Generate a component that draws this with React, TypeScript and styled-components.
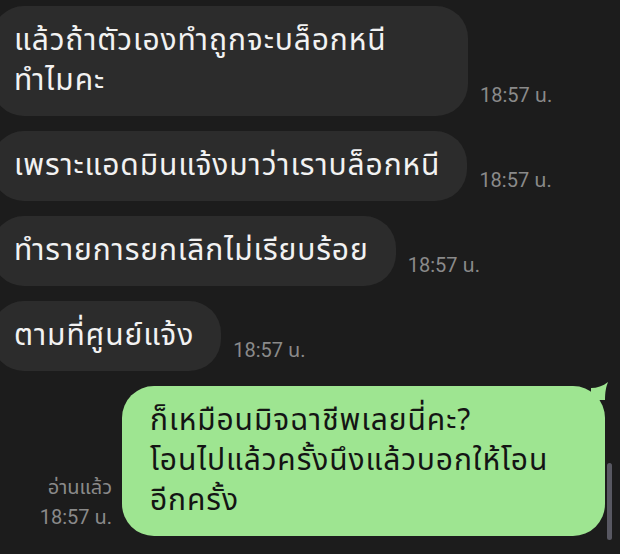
import React from 'react'
import styled, { createGlobalStyle } from 'styled-components'

const GlobalStyle = createGlobalStyle`
  html, body {
    margin: 0;
    padding: 0;
    background: #1c1c1c;
  }
  body {
    font-family: "Noto Sans Thai", "Noto Sans", "DejaVu Sans", sans-serif;
  }
`

const Screen = styled.div`
  position: relative;
  width: 620px;
  height: 554px;
  overflow: hidden;
  background: #1c1c1c;
`

const ChatList = styled.div`
  display: flex;
  flex-direction: column;
  gap: 15px;
  padding-top: 6px;
`

const Row = styled.div<{ $mine?: boolean }>`
  display: flex;
  align-items: flex-end;
  justify-content: ${(p) => (p.$mine ? 'flex-end' : 'flex-start')};
  gap: ${(p) => (p.$mine ? '10px' : '12px')};
  padding-right: ${(p) => (p.$mine ? '15px' : '0')};
`

const Bubble = styled.div<{ $full?: boolean }>`
  margin-left: -8px;
  padding: 15px 27px 15px 22px;
  border-radius: 32px;
  background: #2c2c2c;
  color: #f2f2f2;
  font-size: 30px;
  line-height: 40px;
  letter-spacing: 0.9px;
  white-space: nowrap;
  width: ${(p) => (p.$full ? '427px' : 'auto')};
`

const MyBubble = styled.div`
  position: relative;
  width: 455px;
  padding: 15px 0 15px 28px;
  border-radius: 32px;
  background: #9ee591;
  color: #141414;
  font-size: 30px;
  line-height: 40px;
  letter-spacing: 0.9px;
  white-space: nowrap;
`

const Tail = styled.svg`
  position: absolute;
  top: -4px;
  right: -4px;
`

const Time = styled.div`
  font-family: Roboto, "Noto Sans Thai", sans-serif;
  font-size: 20px;
  color: #8a8a8a;
  margin-bottom: 5px;
  white-space: nowrap;
`

const ReadInfo = styled.div`
  display: flex;
  flex-direction: column;
  align-items: flex-end;
  font-family: Roboto, "Noto Sans Thai", sans-serif;
  font-size: 20px;
  line-height: 30px;
  color: #8a8a8a;
  margin-bottom: 4px;
`

const ScrollThumb = styled.div`
  position: absolute;
  right: 8px;
  top: 463px;
  width: 5px;
  height: 77px;
  border-radius: 3px;
  background: #585862;
`

const incoming = [
  { lines: ['แล้วถ้าตัวเองทำถูกจะบล็อกหนี', 'ทำไมคะ'], full: true },
  { lines: ['เพราะแอดมินแจ้งมาว่าเราบล็อกหนี'] },
  { lines: ['ทำรายการยกเลิกไม่เรียบร้อย'] },
  { lines: ['ตามที่ศูนย์แจ้ง'] },
]

const App = () => {
  return (
    <Screen>
      <GlobalStyle />
      <ChatList>
        {incoming.map((msg, index) => (
          <Row key={`msg_${index + 1}`}>
            <Bubble $full={msg.full}>
              {msg.lines.map((line, i) => (
                <div key={`line_${i + 1}`}>{line}</div>
              ))}
            </Bubble>
            <Time>18:57 น.</Time>
          </Row>
        ))}

        <Row $mine>
          <ReadInfo>
            <span>อ่านแล้ว</span>
            <span>18:57 น.</span>
          </ReadInfo>
          <MyBubble>
            <div>ก็เหมือนมิจฉาชีพเลยนี่คะ?</div>
            <div>โอนไปแล้วครั้งนึงแล้วบอกให้โอน</div>
            <div>อีกครั้ง</div>
            <Tail width="18" height="18" viewBox="0 0 18 18">
              <path d="M0 6 C6 6 12 4 17 0 C15 5 14 10 14 18 L0 18 Z" fill="#9ee591" />
            </Tail>
          </MyBubble>
        </Row>
      </ChatList>
      <ScrollThumb />
    </Screen>
  )
}

export default App
